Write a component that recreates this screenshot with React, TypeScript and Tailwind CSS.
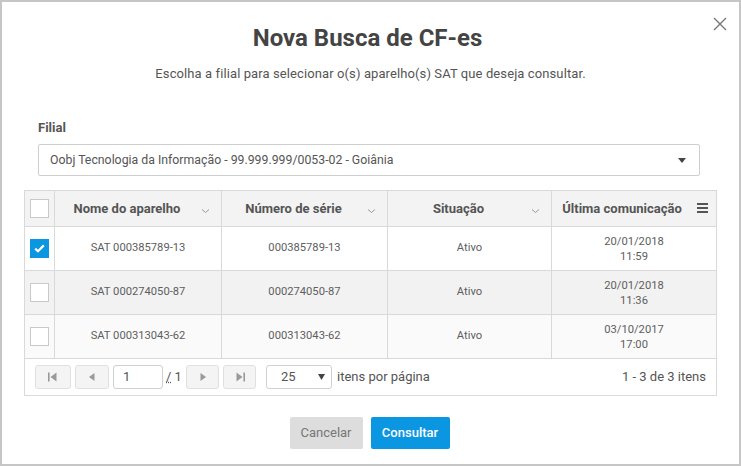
const rows = [
  { nome: 'SAT 000385789-13', serie: '000385789-13', situacao: 'Ativo', data: '20/01/2018', hora: '11:59', checked: true, bg: 'bg-white' },
  { nome: 'SAT 000274050-87', serie: '000274050-87', situacao: 'Ativo', data: '20/01/2018', hora: '11:36', checked: false, bg: 'bg-[#f2f2f2]' },
  { nome: 'SAT 000313043-62', serie: '000313043-62', situacao: 'Ativo', data: '03/10/2017', hora: '17:00', checked: false, bg: 'bg-[#fafafa]' },
];

const cols = 'grid grid-cols-[30px_167px_166px_164px_1fr]';

function Chevron() {
  return (
    <svg width="9" height="6" viewBox="0 0 9 6" className="text-[#999]">
      <path d="M1 1.5 L4.5 4.5 L8 1.5" fill="none" stroke="currentColor" strokeWidth="1" />
    </svg>
  );
}

function Checkbox({ checked }: { checked: boolean }) {
  if (checked) {
    return (
      <div className="flex h-[19px] w-[19px] items-center justify-center bg-[#0a96e0]">
        <svg width="11" height="9" viewBox="0 0 11 9">
          <path d="M1.2 4.6 L4 7.2 L9.8 1.4" fill="none" stroke="white" strokeWidth="2.2" />
        </svg>
      </div>
    );
  }
  return <div className="h-[19px] w-[19px] border border-[#c9c9c9] bg-white" />;
}

function PagerBtn({ kind, w }: { kind: 'first' | 'prev' | 'next' | 'last'; w: string }) {
  return (
    <button className={`flex h-[24px] ${w} items-center justify-center rounded-[3px] border border-[#e0e0e0] bg-[#f4f4f4]`}>
      <svg width="12" height="10" viewBox="0 0 12 10" className="text-[#9a9a9a]">
        {kind === 'first' && (
          <>
            <rect x="1" y="0.5" width="1.6" height="9" fill="currentColor" />
            <path d="M9.5 0.5 L3.5 5 L9.5 9.5 Z" fill="currentColor" />
          </>
        )}
        {kind === 'prev' && <path d="M8.5 1 L3 5 L8.5 9 Z" fill="currentColor" />}
        {kind === 'next' && <path d="M3.5 1 L9 5 L3.5 9 Z" fill="currentColor" />}
        {kind === 'last' && (
          <>
            <path d="M2.5 0.5 L8.5 5 L2.5 9.5 Z" fill="currentColor" />
            <rect x="9.4" y="0.5" width="1.6" height="9" fill="currentColor" />
          </>
        )}
      </svg>
    </button>
  );
}

export default function App() {
  return (
    <div className="relative h-[466px] w-[741px] border-2 border-[#c6c6c6] bg-white font-['Roboto',sans-serif] text-[#555]">
      <button className="absolute right-[12px] top-[15px] text-[#777]">
        <svg width="14" height="14" viewBox="0 0 14 14">
          <path d="M1 1 L13 13 M13 1 L1 13" fill="none" stroke="currentColor" strokeWidth="1.4" />
        </svg>
      </button>

      {/* Header */}
      <div className="flex flex-col items-center pt-[22px]">
        <h2 className="pr-[6px] text-[24px] font-bold leading-[28px] text-[#444]">Nova Busca de CF-es</h2>
        <p className="mt-[14px] text-[13px] leading-[16px] tracking-[0.1px] text-[#555]">
          Escolha a filial para selecionar o(s) aparelho(s) SAT que deseja consultar.
        </p>
      </div>

      {/* Filial */}
      <div className="pl-[36px] pr-[39px] pt-[38px]">
        <label className="block text-[13px] font-bold leading-[16px] text-[#555]">Filial</label>
        <div className="mt-[8px] flex h-[32px] items-center justify-between rounded-[2px] border border-[#cfcfcf] px-[11px]">
          <span className="text-[12.3px] text-[#555]">Oobj Tecnologia da Informação - 99.999.999/0053-02 - Goiânia</span>
          <svg width="8" height="5" viewBox="0 0 8 5" className="mr-[2px] text-[#444]">
            <path d="M0 0 L8 0 L4 5 Z" fill="currentColor" />
          </svg>
        </div>
      </div>

      {/* Table */}
      <div className="mx-[22px] mt-[14px] border border-[#d9d9d9]">
        <div className={`${cols} h-[36px] border-b border-[#d9d9d9] bg-[#f3f3f3] text-[13px] font-bold text-[#555]`}>
          <div className="flex items-center justify-center border-r border-[#d9d9d9]">
            <Checkbox checked={false} />
          </div>
          {['Nome do aparelho', 'Número de série', 'Situação'].map((h) => (
            <div key={h} className="relative flex items-center justify-center border-r border-[#d9d9d9] pr-[22px]">
              <span>{h}</span>
              <span className="absolute right-[11px] top-[17px]"><Chevron /></span>
            </div>
          ))}
          <div className="relative flex items-center justify-center pr-[24px]">
            <span>Última comunicação</span>
            <svg width="11" height="10" viewBox="0 0 11 10" className="absolute right-[8px] top-[12px] text-[#555]">
              <rect x="0" y="0" width="11" height="2" fill="currentColor" />
              <rect x="0" y="4" width="11" height="2" fill="currentColor" />
              <rect x="0" y="8" width="11" height="2" fill="currentColor" />
            </svg>
          </div>
        </div>

        {rows.map((r) => (
          <div key={r.nome} className={`${cols} h-[44px] border-b border-[#d9d9d9] ${r.bg} text-[11.2px] text-[#5e5e5e]`}>
            <div className="flex items-center justify-center border-r border-[#d9d9d9]">
              <Checkbox checked={r.checked} />
            </div>
            <div className="flex items-center justify-center border-r border-[#d9d9d9]">{r.nome}</div>
            <div className="flex items-center justify-center border-r border-[#d9d9d9]">{r.serie}</div>
            <div className="flex items-center justify-center border-r border-[#d9d9d9]">{r.situacao}</div>
            <div className="flex flex-col items-center justify-center leading-[15px]">
              <span>{r.data}</span>
              <span>{r.hora}</span>
            </div>
          </div>
        ))}

        {/* Pager */}
        <div className="flex h-[36px] items-center justify-between pl-[10px] pr-[10px] text-[13px] text-[#555]">
          <div className="flex items-center">
            <PagerBtn kind="first" w="w-[36px]" />
            <div className="ml-[4px]"><PagerBtn kind="prev" w="w-[34px]" /></div>
            <div className="ml-[4px] flex h-[24px] w-[50px] items-center rounded-[3px] border border-[#d0d0d0] bg-white pl-[9px]">1</div>
            <span className="ml-[3px] w-[20px]"><span className="underline decoration-dotted">/</span> 1</span>
            <PagerBtn kind="next" w="w-[33px]" />
            <div className="ml-[4px]"><PagerBtn kind="last" w="w-[33px]" /></div>
            <div className="ml-[10px] flex h-[24px] w-[66px] items-center justify-between rounded-[3px] border border-[#d0d0d0] bg-white pl-[14px] pr-[6px]">
              <span>25</span>
              <svg width="7" height="6" viewBox="0 0 7 6" className="text-[#444]">
                <path d="M0 0 L7 0 L3.5 6 Z" fill="currentColor" />
              </svg>
            </div>
            <span className="ml-[5px]">itens por página</span>
          </div>
          <span>1 - 3 de 3 itens</span>
        </div>
      </div>

      {/* Buttons */}
      <div className="mt-[21px] flex justify-center gap-[8px] pr-[2px]">
        <button className="h-[32px] w-[73px] rounded-[2px] bg-[#dddddd] text-[13px] text-[#777]">Cancelar</button>
        <button className="h-[32px] w-[79px] rounded-[2px] bg-[#0a96e0] text-[13px] font-medium text-white">Consultar</button>
      </div>
    </div>
  );
}
